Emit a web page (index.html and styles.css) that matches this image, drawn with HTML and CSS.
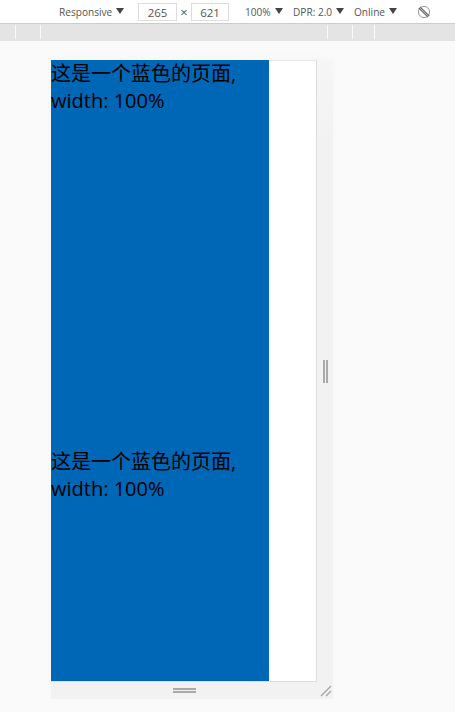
FILE: index.html
```html
<!DOCTYPE html>
<html lang="en">

<head>
    <meta charset="UTF-8">
    <title>Responsive</title>
    <link rel="stylesheet" href="styles.css">
</head>

<body>
    <div class="toolbar">
        <span class="menu menu-device">Responsive<i class="arrow"></i></span>
        <span class="size-box">265</span>
        <span class="times">×</span>
        <span class="size-box size-box-h">621</span>
        <span class="menu menu-zoom">100%<i class="arrow"></i></span>
        <span class="menu menu-dpr">DPR: 2.0<i class="arrow"></i></span>
        <span class="menu menu-net">Online<i class="arrow"></i></span>
        <svg class="rotate" width="14" height="14" viewBox="0 0 14 14">
            <circle cx="7" cy="7" r="5.6" fill="none" stroke="#999" stroke-width="1"></circle>
            <path d="M3 1.8L12.2 11M1.8 3L11 12.2" fill="none" stroke="#666" stroke-width="1.1"></path>
        </svg>
    </div>

    <div class="ruler">
        <i class="tick tick-a"></i>
        <i class="tick tick-b"></i>
        <i class="tick tick-c"></i>
        <i class="tick tick-d"></i>
        <i class="tick tick-e"></i>
    </div>

    <div class="stage">
        <div class="gutter">
            <div class="top-row">
                <div class="device">
                    <div class="page">
                        <div class="block">这是一个蓝色的页面,<br>width: 100%</div>
                        <div class="block">这是一个蓝色的页面,<br>width: 100%</div>
                    </div>
                </div>
                <div class="handle-right"><i></i><i></i></div>
            </div>
            <div class="bottom-row">
                <div class="handle-bottom"><i></i><i></i></div>
                <svg class="corner" width="12" height="12" viewBox="0 0 12 12">
                    <path d="M1 11L11 1M6 11l5-5" stroke="#a6a6a6" stroke-width="1.4" fill="none"></path>
                </svg>
            </div>
        </div>
    </div>
</body>

</html>
```

FILE: styles.css
```css
* {
    margin: 0;
    padding: 0;
    box-sizing: border-box;
}

body {
    width: 455px;
    height: 712px;
    overflow: hidden;
    background: #fafafa;
    font-family: "Open Sans", "Liberation Sans", sans-serif;
}

.toolbar {
    display: flex;
    align-items: center;
    height: 24px;
    background: #fff;
    border-bottom: 1px solid #ccc;
    font-size: 10.1px;
    color: #555;
}

.menu {
    display: flex;
    align-items: center;
    white-space: nowrap;
}

.menu-device {
    width: 79px;
    margin-left: 59px;
}

.menu-zoom {
    width: 48px;
    margin-left: 16px;
}

.menu-dpr {
    width: 61px;
}

.menu-net {
    width: 63px;
}

.arrow {
    width: 0;
    height: 0;
    margin-left: 4px;
    margin-bottom: 2px;
    border-left: 4px solid transparent;
    border-right: 4px solid transparent;
    border-top: 6px solid #444;
}

.size-box {
    width: 39px;
    height: 18px;
    line-height: 17px;
    text-align: center;
    background: #fff;
    border: 1px solid #ddd;
    font-size: 11.5px;
}

.size-box-h {
    width: 38px;
}

.times {
    width: 14px;
    text-align: center;
    font-size: 13px;
}

.rotate {
    display: block;
}

.ruler {
    position: relative;
    height: 17px;
    background: #e4e4e4;
}

.tick {
    position: absolute;
    top: 1px;
    width: 1px;
    height: 14px;
    background: #fafafa;
}

.tick-a { left: 15px; }
.tick-b { left: 40px; }
.tick-c { left: 327px; }
.tick-d { left: 352px; }
.tick-e { left: 374px; }

.stage {
    padding: 19px 0 0 51px;
}

.gutter {
    width: 282px;
    height: 639px;
    background: linear-gradient(to bottom, #f6f6f6, #f2f2f2 12%);
    box-shadow: 0 -2px 8px rgba(0, 0, 0, .02);
}

.top-row {
    display: flex;
    height: 622px;
}

.device {
    width: 266px;
    background: #fff;
    border-right: 1px solid #ddd;
    border-bottom: 1px solid #ddd;
    border-top: 1px solid #e8e8e8;
}

.page {
    width: 218px;
    height: 621px;
    margin-top: -1px;
    background: #0066b6;
    color: #000;
    font-family: "Open Sans", "Noto Sans CJK SC", sans-serif;
    font-size: 20px;
    line-height: 27px;
}

.block {
    height: 388px;
}

.block:last-child {
    height: auto;
}

.handle-right {
    display: flex;
    align-items: center;
    gap: 1px;
    width: 16px;
    padding-left: 6px;
}

.handle-right i {
    width: 2px;
    height: 23px;
    background: #a9a9a9;
}

.bottom-row {
    display: flex;
    align-items: center;
    justify-content: space-between;
    height: 17px;
    padding-left: 122px;
}

.handle-bottom {
    display: flex;
    flex-direction: column;
    gap: 1px;
}

.handle-bottom i {
    display: block;
    width: 23px;
    height: 2px;
    background: #a9a9a9;
}

.corner {
    display: block;
    margin-right: 1px;
}
```
